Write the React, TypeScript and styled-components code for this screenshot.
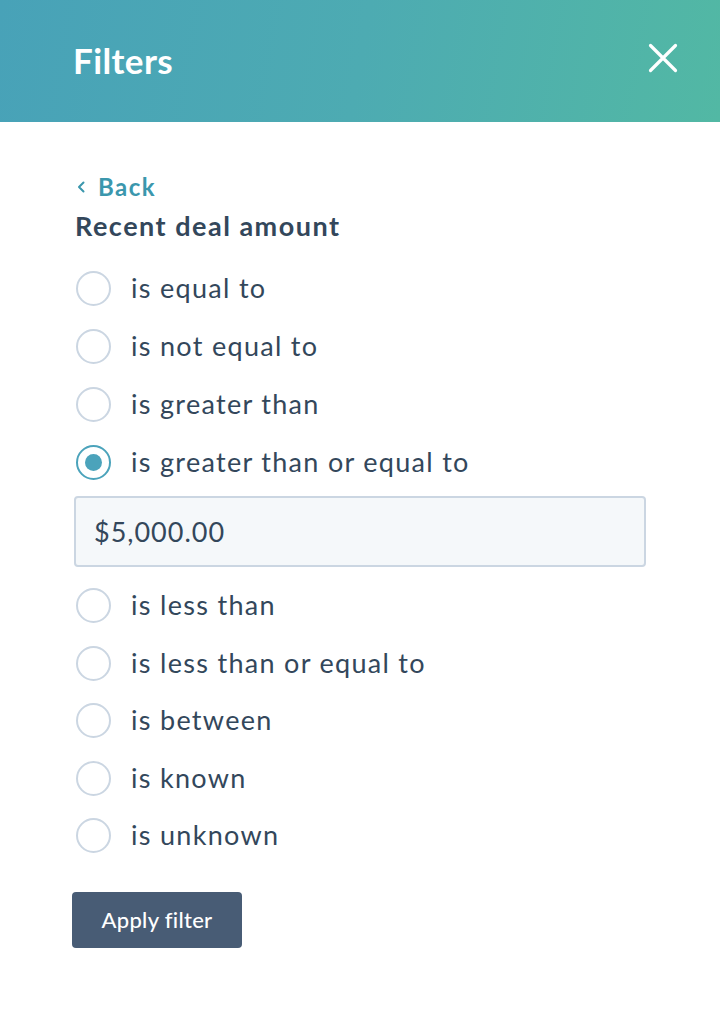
import React, { useState } from "react";
import styled, { createGlobalStyle } from "styled-components";

const Global = createGlobalStyle`
  html, body { margin: 0; padding: 0; background: #ffffff; }
  body { font-family: Lato, "Noto Sans", sans-serif; -webkit-font-smoothing: antialiased; }
  * { box-sizing: border-box; }
`;

const Panel = styled.div`
  width: 720px;
  height: 1030px;
  background: #fff;
  display: flex;
  flex-direction: column;
`;

const Header = styled.header`
  height: 122px;
  flex: none;
  background: linear-gradient(100deg, #48a2b8 0%, #4dabb2 50%, #52b8a4 100%);
  display: flex;
  align-items: center;
  justify-content: space-between;
  padding: 0 41px 0 73px;
`;

const Title = styled.h1`
  margin: 0;
  color: #fff;
  font-family: Lato, sans-serif;
  font-weight: 700;
  font-size: 35px;
  letter-spacing: 0.4px;
  line-height: 1;
  padding-bottom: 2px;
`;

const CloseButton = styled.button`
  width: 32px;
  height: 32px;
  border: 0;
  padding: 0;
  margin-bottom: 6px;
  background: transparent;
  cursor: pointer;
  display: flex;
  align-items: center;
  justify-content: center;
`;

const Body = styled.div`
  display: flex;
  flex-direction: column;
  padding: 50px 74px 0 74px;
`;

const BackLink = styled.a`
  display: flex;
  align-items: center;
  gap: 13px;
  color: #3b97ad;
  font-size: 24px;
  font-weight: 700;
  letter-spacing: 1.5px;
  line-height: 30px;
  text-decoration: none;
  cursor: pointer;
  padding-left: 3px;
`;

const SectionTitle = styled.h2`
  margin: 8px 0 17px 0;
  color: #33475b;
  font-size: 27px;
  font-weight: 700;
  letter-spacing: 1.5px;
  line-height: 32px;
  padding-left: 1px;
`;

const Options = styled.div`
  display: flex;
  flex-direction: column;
`;

const Row = styled.label<{ $h: number }>`
  display: flex;
  align-items: center;
  height: ${(p) => p.$h}px;
  gap: 20px;
  padding-left: 2px;
  cursor: pointer;
`;

const Circle = styled.span<{ $checked: boolean }>`
  width: 35px;
  height: 35px;
  border-radius: 50%;
  border: 2px solid ${(p) => (p.$checked ? "#4ba3bb" : "#cbd6e2")};
  background: #fff;
  display: flex;
  align-items: center;
  justify-content: center;
  flex: none;
  &::after {
    content: "";
    width: 17px;
    height: 17px;
    border-radius: 50%;
    background: #4ba3bb;
    display: ${(p) => (p.$checked ? "block" : "none")};
  }
`;

const Label = styled.span`
  color: #33475b;
  font-size: 27px;
  font-weight: 400;
  letter-spacing: 1.3px;
  line-height: 1;
  padding-bottom: 2px;
`;

const ValueInput = styled.input`
  width: 572px;
  height: 71px;
  margin: 5px 0 10px 0;
  background: #f5f8fa;
  border: 2px solid #cbd6e2;
  border-radius: 4px;
  padding: 0 18px;
  color: #33475b;
  font-family: Lato, sans-serif;
  font-size: 27px;
  letter-spacing: 1px;
  outline: none;
`;

const ApplyButton = styled.button`
  align-self: flex-start;
  margin-top: 27px;
  margin-left: -2px;
  width: 170px;
  height: 56px;
  border: 0;
  border-radius: 4px;
  background: #485c75;
  color: #fff;
  font-family: Lato, sans-serif;
  font-size: 22px;
  letter-spacing: 0.3px;
  font-weight: 500;
  cursor: pointer;
  padding-bottom: 2px;
`;

const before = ["is equal to", "is not equal to", "is greater than", "is greater than or equal to"];
const after = ["is less than", "is less than or equal to", "is between", "is known", "is unknown"];

export default function App() {
  const [selected, setSelected] = useState("is greater than or equal to");
  const [value, setValue] = useState("$5,000.00");

  const renderRow = (h: number) => (opt: string) => (
    <Row key={opt} $h={h} onClick={() => setSelected(opt)}>
      <Circle $checked={selected === opt} />
      <Label>{opt}</Label>
    </Row>
  );

  return (
    <>
      <Global />
      <Panel>
        <Header>
          <Title>Filters</Title>
          <CloseButton aria-label="Close">
            <svg width="30" height="30" viewBox="0 0 30 30" fill="none">
              <path d="M2.5 2.5 L27.5 27.5 M27.5 2.5 L2.5 27.5" stroke="#fff" strokeWidth="3.2" strokeLinecap="round" />
            </svg>
          </CloseButton>
        </Header>
        <Body>
          <BackLink>
            <svg width="8" height="12" viewBox="0 0 8 12" fill="none">
              <path d="M6.5 1.5 L2 6 L6.5 10.5" stroke="#3b97ad" strokeWidth="2" strokeLinecap="round" strokeLinejoin="round" />
            </svg>
            Back
          </BackLink>
          <SectionTitle>Recent deal amount</SectionTitle>
          <Options>
            {before.map(renderRow(58))}
            {selected === "is greater than or equal to" && (
              <ValueInput value={value} onChange={(e) => setValue(e.target.value)} />
            )}
            {after.map(renderRow(57.5))}
          </Options>
          <ApplyButton>Apply filter</ApplyButton>
        </Body>
      </Panel>
    </>
  );
}
